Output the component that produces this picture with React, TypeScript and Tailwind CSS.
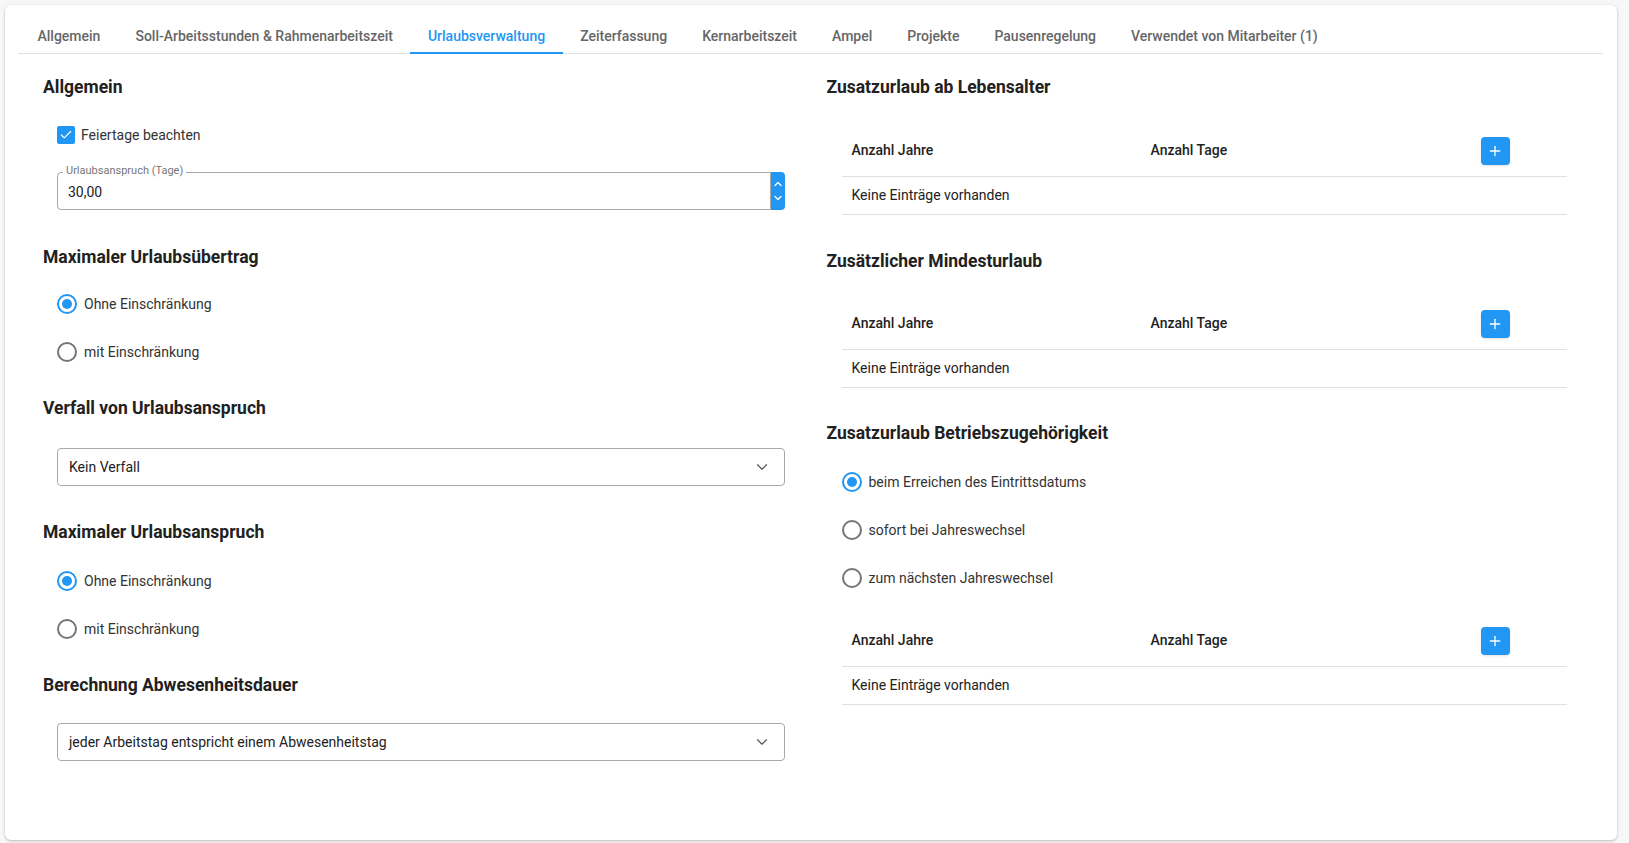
import { Check, ChevronDown, ChevronUp, Plus } from "lucide-react";

const tabs = [
	"Allgemein",
	"Soll-Arbeitsstunden & Rahmenarbeitszeit",
	"Urlaubsverwaltung",
	"Zeiterfassung",
	"Kernarbeitszeit",
	"Ampel",
	"Projekte",
	"Pausenregelung",
	"Verwendet von Mitarbeiter (1)",
];

function Heading({ children, className = "" }: { children: string; className?: string }) {
	return (
		<h2 className={`h-[30px] flex items-center text-[17.5px] font-bold text-[#212121] ${className}`}>
			{children}
		</h2>
	);
}

function Radio({ label, checked = false }: { label: string; checked?: boolean }) {
	return (
		<label className="h-[48px] flex items-center gap-[7px] text-[14px] text-[#333]">
			<span
				className={`w-[20px] h-[20px] rounded-full border-2 flex items-center justify-center ${
					checked ? "border-[#2196f3]" : "border-[#757575]"
				}`}
			>
				{checked && <span className="w-[10px] h-[10px] rounded-full bg-[#2196f3]" />}
			</span>
			{label}
		</label>
	);
}

function Select({ value }: { value: string }) {
	return (
		<div className="h-[38px] border border-[#a8a8a8] rounded-[4px] flex items-center justify-between pl-[11px] pr-[13px] text-[14px] text-[#222]">
			<span>{value}</span>
			<ChevronDown size={18} strokeWidth={1.5} className="text-[#555]" />
		</div>
	);
}

function EntryTable({ className = "" }: { className?: string }) {
	return (
		<div className={`px-[15px] ${className}`}>
			<div className="h-[52px] flex items-center border-b border-[#e0e0e0] text-[14px] font-medium text-[#222]">
				<span className="w-[309px] pl-[10px]">Anzahl Jahre</span>
				<span className="w-[330px]">Anzahl Tage</span>
				<button className="w-[29px] h-[28px] rounded-[4px] bg-[#2196f3] text-white flex items-center justify-center shadow-sm">
					<Plus size={16} strokeWidth={2} />
				</button>
			</div>
			<div className="h-[38px] flex items-center border-b border-[#e0e0e0] pl-[10px] text-[14px] text-[#222]">
				Keine Einträge vorhanden
			</div>
		</div>
	);
}

export default function App() {
	return (
		<div className="min-h-[843px] bg-[#f7f7f7] p-[5px] pr-[12px]" style={{ fontFamily: "Roboto, 'Noto Sans', sans-serif" }}>
			<div className="h-[835px] bg-white rounded-[6px] shadow-[0_1px_3px_rgba(0,0,0,0.25)] px-[13px]">
				<nav className="flex border-b border-[#e0e0e0] mr-[1px] h-[49px] items-end pl-[2px]">
					{tabs.map((t) => {
						const active = t === "Urlaubsverwaltung";
						return (
							<div
								key={t}
								className={`relative h-[48px] px-[17.5px] pt-[14px] flex items-center text-[14px] font-medium ${
									active ? "text-[#2196f3]" : "text-[#666]"
								}`}
							>
								{t}
								{active && <span className="absolute left-0 right-0 -bottom-[1px] h-[2px] bg-[#2196f3]" />}
							</div>
						);
					})}
				</nav>

				<div className="grid grid-cols-2 gap-x-[28px] pl-[25px] pr-[22px]">
					{/* left */}
					<div className="flex flex-col pt-[18px]">
						<Heading>Allgemein</Heading>
						<div className="px-[14px]">
							<label className="mt-[18px] h-[30px] flex items-center gap-[6px] text-[14px] text-[#333]">
								<span className="w-[18px] h-[18px] rounded-[2px] bg-[#2196f3] flex items-center justify-center">
									<Check size={14} strokeWidth={2} className="text-white" />
								</span>
								Feiertage beachten
							</label>
							<div className="mt-[22px] relative h-[38px] flex">
								<div className="flex-1 border border-[#a8a8a8] rounded-l-[4px] flex items-center pl-[10px] pt-[2px] text-[14px] text-[#222]">
									30,00
								</div>
								<span className="absolute left-[6px] -top-[8px] bg-white px-[3px] text-[11px] leading-[14px] text-[#777]">
									Urlaubsanspruch (Tage)
								</span>
								<div className="w-[14px] bg-[#2196f3] rounded-r-[4px] flex flex-col items-center justify-center gap-[2px] text-white">
									<ChevronUp size={12} strokeWidth={2.5} />
									<ChevronDown size={12} strokeWidth={2.5} />
								</div>
							</div>
						</div>

						<Heading className="mt-[32px]">Maximaler Urlaubsübertrag</Heading>
						<div className="px-[14px] mt-[8px]">
							<Radio label="Ohne Einschränkung" checked />
							<Radio label="mit Einschränkung" />
						</div>

						<Heading className="mt-[17px]">Verfall von Urlaubsanspruch</Heading>
						<div className="px-[14px] mt-[25px]">
							<Select value="Kein Verfall" />
						</div>

						<Heading className="mt-[31px]">Maximaler Urlaubsanspruch</Heading>
						<div className="px-[14px] mt-[10px]">
							<Radio label="Ohne Einschränkung" checked />
							<Radio label="mit Einschränkung" />
						</div>

						<Heading className="mt-[17px]">Berechnung Abwesenheitsdauer</Heading>
						<div className="px-[14px] mt-[23px]">
							<Select value="jeder Arbeitstag entspricht einem Abwesenheitstag" />
						</div>
					</div>

					{/* right */}
					<div className="flex flex-col pt-[18px]">
						<Heading>Zusatzurlaub ab Lebensalter</Heading>
						<EntryTable className="mt-[23px]" />

						<Heading className="mt-[31px]">Zusätzlicher Mindesturlaub</Heading>
						<EntryTable className="mt-[22px]" />

						<Heading className="mt-[30px]">Zusatzurlaub Betriebszugehörigkeit</Heading>
						<div className="px-[15px] mt-[10px]">
							<Radio label="beim Erreichen des Eintrittsdatums" checked />
							<Radio label="sofort bei Jahreswechsel" />
							<Radio label="zum nächsten Jahreswechsel" />
						</div>
						<EntryTable className="mt-[13px]" />
					</div>
				</div>
			</div>
		</div>
	);
}
